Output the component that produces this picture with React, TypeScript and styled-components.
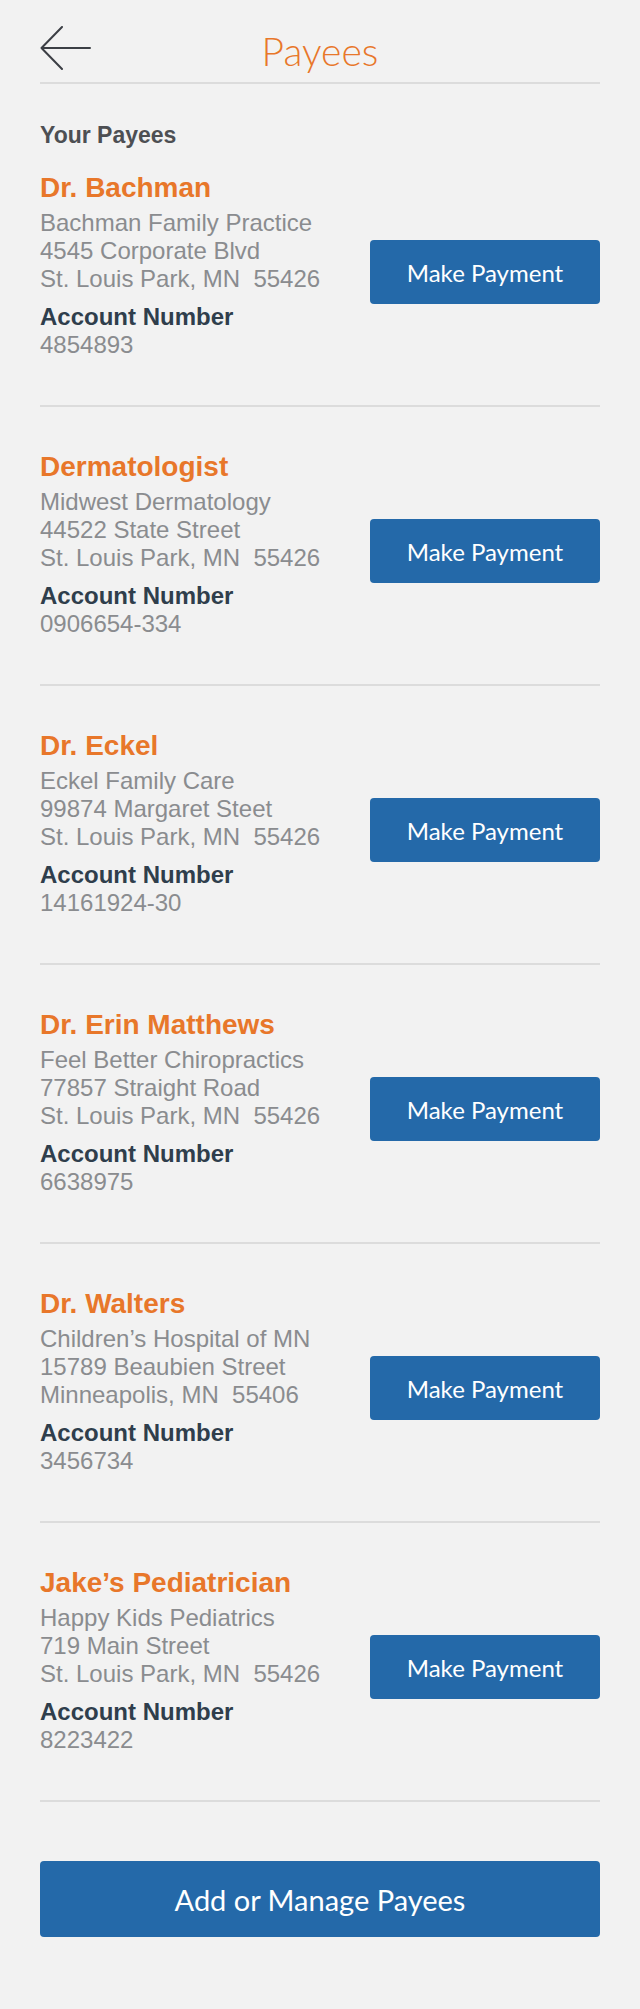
import React from "react";
import styled, { createGlobalStyle } from "styled-components";

const GlobalStyle = createGlobalStyle`
  html, body {
    margin: 0;
    padding: 0;
    background: #f2f2f2;
  }
  * { box-sizing: border-box; }
`;

const Page = styled.div`
  width: 640px;
  min-height: 2009px;
  background: #f2f2f2;
  padding: 0 40px 70px;
  font-family: "Liberation Sans", Arial, sans-serif;
`;

const Header = styled.header`
  display: grid;
  grid-template-columns: 1fr auto 1fr;
  align-items: start;
  padding: 27px 0 7px;
  border-bottom: 2px solid #dcdcdc;
`;

const BackButton = styled.button`
  justify-self: start;
  margin: -1px 0 0;
  padding: 0;
  border: none;
  background: none;
  display: flex;
  cursor: pointer;
`;

const Title = styled.h1`
  margin: 0;
  font-family: "Lato", sans-serif;
  font-weight: 300;
  font-size: 39px;
  line-height: 48px;
  color: #e8772a;
`;

const SectionTitle = styled.h2`
  margin: 38px 0 0;
  font-size: 23px;
  line-height: 26px;
  font-weight: 700;
  color: #4d4f53;
`;

const Card = styled.div<{ $first?: boolean }>`
  display: flex;
  justify-content: space-between;
  align-items: flex-start;
  padding: ${(p) => (p.$first ? "24px" : "44px")} 0 46px;
  border-bottom: 2px solid #dcdcdc;
`;

const Info = styled.div`
  display: flex;
  flex-direction: column;
`;

const Name = styled.div`
  font-size: 28px;
  line-height: 32px;
  font-weight: 700;
  color: #e8772a;
`;

const Address = styled.div`
  margin-top: 5px;
  font-size: 24px;
  line-height: 28px;
  color: #8a8c8f;
  white-space: pre;
`;

const Label = styled.div`
  margin-top: 10px;
  font-size: 24px;
  line-height: 28px;
  font-weight: 700;
  color: #2f3e4c;
`;

const Value = styled.div`
  font-size: 24px;
  line-height: 28px;
  color: #8a8c8f;
`;

const PayButton = styled.button`
  margin-top: 68px;
  width: 230px;
  height: 64px;
  border: none;
  border-radius: 4px;
  background: #2469a9;
  color: #ffffff;
  font-family: "Lato", sans-serif;
  font-weight: 400;
  font-size: 24px;
  cursor: pointer;
`;

const ManageButton = styled.button`
  display: block;
  width: 100%;
  height: 76px;
  margin-top: 59px;
  border: none;
  border-radius: 4px;
  background: #2469a9;
  color: #ffffff;
  font-family: "Lato", sans-serif;
  font-weight: 400;
  font-size: 29px;
  cursor: pointer;
`;

type Payee = {
  name: string;
  lines: string[];
  account: string;
};

const payees: Payee[] = [
  {
    name: "Dr. Bachman",
    lines: ["Bachman Family Practice", "4545 Corporate Blvd", "St. Louis Park, MN  55426"],
    account: "4854893",
  },
  {
    name: "Dermatologist",
    lines: ["Midwest Dermatology", "44522 State Street", "St. Louis Park, MN  55426"],
    account: "0906654-334",
  },
  {
    name: "Dr. Eckel",
    lines: ["Eckel Family Care", "99874 Margaret Steet", "St. Louis Park, MN  55426"],
    account: "14161924-30",
  },
  {
    name: "Dr. Erin Matthews",
    lines: ["Feel Better Chiropractics", "77857 Straight Road", "St. Louis Park, MN  55426"],
    account: "6638975",
  },
  {
    name: "Dr. Walters",
    lines: ["Children\u2019s Hospital of MN", "15789 Beaubien Street", "Minneapolis, MN  55406"],
    account: "3456734",
  },
  {
    name: "Jake\u2019s Pediatrician",
    lines: ["Happy Kids Pediatrics", "719 Main Street", "St. Louis Park, MN  55426"],
    account: "8223422",
  },
];

const BackArrow = () => (
  <svg width="52" height="44" viewBox="0 0 52 44" fill="none">
    <path
      d="M22 1 L1.5 22 L22 43 M1.5 22 H50"
      stroke="#3c3f45"
      strokeWidth="2"
      strokeLinecap="round"
      strokeLinejoin="round"
    />
  </svg>
);

export default function App() {
  return (
    <>
      <GlobalStyle />
      <Page>
        <Header>
          <BackButton aria-label="Back">
            <BackArrow />
          </BackButton>
          <Title>Payees</Title>
          <div />
        </Header>
        <SectionTitle>Your Payees</SectionTitle>
        {payees.map((p, i) => (
          <Card key={p.name} $first={i === 0}>
            <Info>
              <Name>{p.name}</Name>
              <Address>{p.lines.join("\n")}</Address>
              <Label>Account Number</Label>
              <Value>{p.account}</Value>
            </Info>
            <PayButton>Make Payment</PayButton>
          </Card>
        ))}
        <ManageButton>Add or Manage Payees</ManageButton>
      </Page>
    </>
  );
}
